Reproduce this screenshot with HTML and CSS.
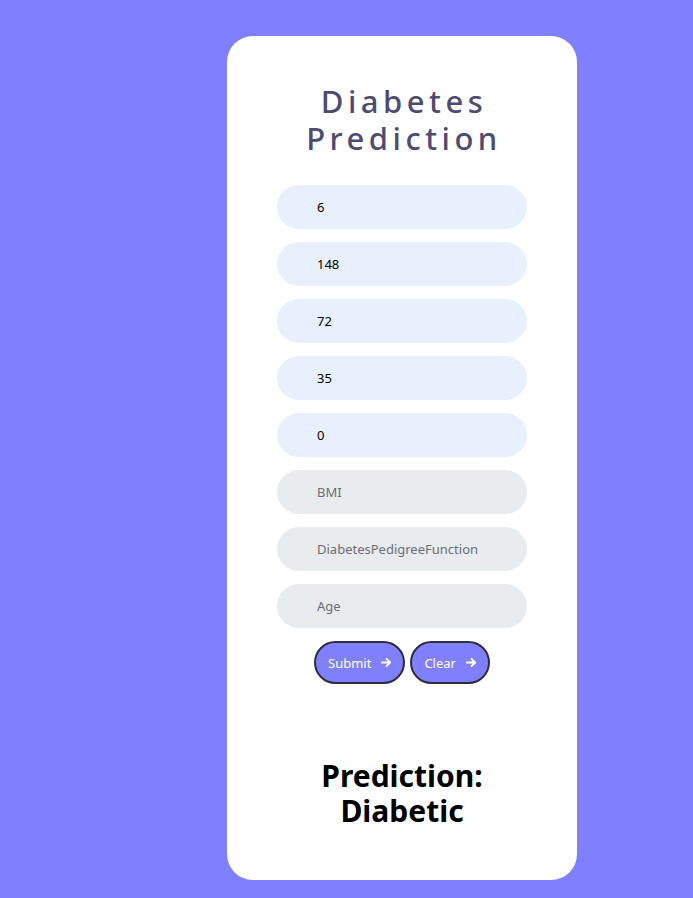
FILE: index.html
```html
<!DOCTYPE html>
<html>
<head>
<meta charset="utf-8">
<link rel="stylesheet" href="styles.css">
</head>
<body>
<div class="card">
  <h1 class="title"><span class="line">Diabetes</span><span class="line">Prediction</span></h1>
  <form class="form">
    <input class="field filled" value="6">
    <input class="field filled" value="148">
    <input class="field filled" value="72">
    <input class="field filled" value="35">
    <input class="field filled" value="0">
    <input class="field" placeholder="BMI">
    <input class="field" placeholder="DiabetesPedigreeFunction">
    <input class="field" placeholder="Age">
    <div class="buttons">
      <button type="button" class="btn">Submit <svg class="arrow" viewBox="0 0 12 12"><path d="M1 6h9M6 2l4 4-4 4" fill="none" stroke="#fff" stroke-width="2" stroke-linecap="round" stroke-linejoin="round"/></svg></button>
      <button type="button" class="btn">Clear <svg class="arrow" viewBox="0 0 12 12"><path d="M1 6h9M6 2l4 4-4 4" fill="none" stroke="#fff" stroke-width="2" stroke-linecap="round" stroke-linejoin="round"/></svg></button>
    </div>
  </form>
  <h2 class="result"><span class="line">Prediction:</span><span class="line">Diabetic</span></h2>
</div>
</body>
</html>
```
FILE: styles.css
```css
html, body {
  margin: 0;
  padding: 0;
  background: #8080ff;
  font-family: "Noto Sans", "Open Sans", sans-serif;
}
body {
  padding: 36px 0 18px 227px;
}
.card {
  width: 350px;
  height: 844px;
  box-sizing: border-box;
  background: #fff;
  border-radius: 26px;
  padding-top: 47px;
  display: flex;
  flex-direction: column;
  align-items: center;
}
.line {
  display: block;
}
.title {
  margin: 0;
  font-size: 31px;
  font-weight: 500;
  line-height: 37px;
  letter-spacing: 4.5px;
  color: #4e4b72;
  text-align: center;
  padding-left: 4px;
}
.form {
  margin-top: 28px;
  display: flex;
  flex-direction: column;
  align-items: center;
  gap: 13px;
}
.field {
  width: 250px;
  height: 44px;
  box-sizing: border-box;
  border: none;
  outline: none;
  border-radius: 22px;
  background: #e9ecef;
  padding: 0 0 0 40px;
  font-family: inherit;
  font-size: 13px;
  color: #000;
}
.field::placeholder {
  color: #6c6c72;
}
.field.filled {
  background: #e8f0fe;
}
.buttons {
  display: flex;
  gap: 5px;
}
.btn {
  height: 43px;
  box-sizing: border-box;
  border: 2px solid #2e2d3d;
  border-radius: 22px;
  background: #8080ff;
  color: #fff;
  font-family: inherit;
  font-size: 13px;
  padding: 0 11px 0 12px;
  display: flex;
  align-items: center;
  gap: 10px;
}
.arrow {
  width: 11px;
  height: 11px;
}
.result {
  margin: 74px 0 0;
  font-size: 30px;
  font-weight: 700;
  line-height: 35px;
  color: #000;
  text-align: center;
}
```
